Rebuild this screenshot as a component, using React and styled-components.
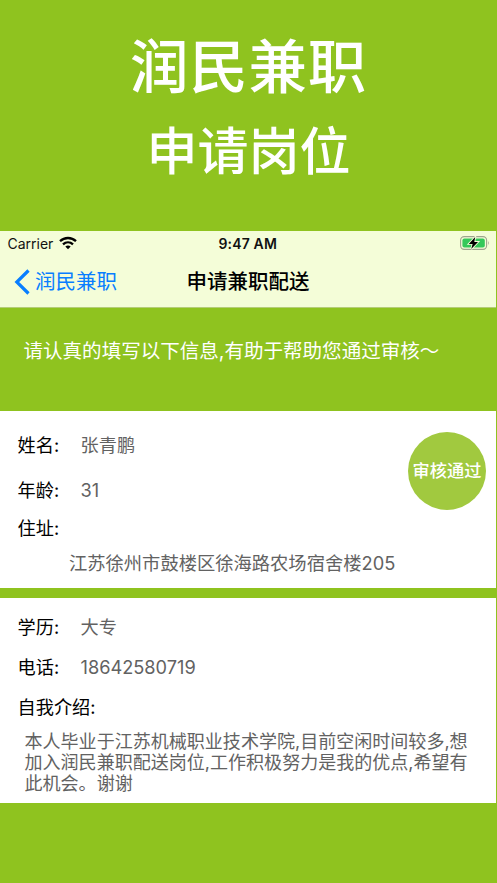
import React from 'react';
import styled, { createGlobalStyle } from 'styled-components';

const GREEN = '#8fc31f';

const GlobalStyle = createGlobalStyle`
  body {
    margin: 0;
    background: ${GREEN};
    font-family: Inter, "Noto Sans CJK SC", sans-serif;
  }
`;

const Page = styled.main`
  box-sizing: border-box;
  width: 497px;
  height: 883px;
  overflow: hidden;
  background: ${GREEN};
  white-space: nowrap;
`;

const Hero = styled.header`
  box-sizing: border-box;
  height: 231px;
  padding-top: 21px;
  color: #fff;
  text-align: center;
  font-family: "Noto Sans CJK SC", sans-serif;
  font-weight: 500;
`;

const HeroLine = styled.h1`
  margin: 0;
  height: ${(p) => p.$height}px;
  line-height: ${(p) => p.$height}px;
  font-size: ${(p) => p.$size}px;
  font-weight: inherit;
  letter-spacing: ${(p) => p.$spacing}px;
`;

const Phone = styled.section`
  width: 496px;
`;

const TopBar = styled.div`
  height: 77px;
  background: #f4fdd8;
  border-bottom: 1px solid #b5cd78;
  box-sizing: border-box;
`;

const StatusBar = styled.div`
  display: grid;
  grid-template-columns: 1fr auto 1fr;
  align-items: center;
  box-sizing: border-box;
  height: 25px;
  padding: 0 6px 0 7.5px;
  font-size: 14px;
  color: #111;
`;

const Carrier = styled.div`
  display: flex;
  align-items: center;
  gap: 6px;
  margin-top: -1px;
`;

const Clock = styled.span`
  margin: -1px 2px 0 0;
  font-weight: 600;
  letter-spacing: 0.15px;
`;

const BatterySlot = styled.div`
  display: flex;
  justify-content: flex-end;
  margin-top: -1px;
`;

const NavBar = styled.nav`
  display: grid;
  grid-template-columns: 1fr auto 1fr;
  align-items: center;
  height: 51px;
  padding: 0 14px;
  line-height: 52px;
  font-size: 20.5px;
  color: #000;
`;

const Back = styled.a`
  display: flex;
  align-items: center;
  gap: 5px;
  color: #087eff;
`;

const NavTitle = styled.h2`
  margin: 0;
  font-size: inherit;
  font-weight: 500;
`;

const Notice = styled.p`
  margin: 0;
  box-sizing: border-box;
  height: 103px;
  padding: 23px 23.5px 0;
  line-height: 40px;
  font-size: 19.55px;
  color: #fff;
`;

const Card = styled.section`
  display: flex;
  justify-content: space-between;
  box-sizing: border-box;
  height: ${(p) => p.$height}px;
  margin-bottom: 10px;
  padding: ${(p) => p.$top}px 10px 0 17.5px;
  background: #fff;
`;

const Fields = styled.div`
  display: flex;
  flex-direction: column;
`;

const Field = styled.div`
  display: flex;
  height: ${(p) => p.$height}px;
  line-height: 30px;
  font-size: 18.2px;
`;

const Label = styled.span`
  width: 63px;
  color: #000;
`;

const Value = styled.span`
  color: #626262;
  font-weight: 400;
`;

const Address = styled(Value)`
  padding-left: 51.5px;
  line-height: 30px;
  font-size: 18.3px;
`;

const Bio = styled.p`
  margin: 0;
  padding-left: 7px;
  line-height: 21px;
  font-size: 18.05px;
  color: #626262;
  white-space: pre-line;
`;

const Badge = styled.div`
  width: 78px;
  height: 78px;
  margin-top: 2px;
  border-radius: 50%;
  background: #a1c93f;
  color: #fff;
  text-align: center;
  line-height: 78px;
  font-size: 17.2px;
  font-weight: 500;
`;

function Wifi() {
  return (
    <svg width="18" height="14" viewBox="0 0 18 14" fill="none" stroke="#000" strokeWidth="2.3">
      <path d="M1 5.2C5.5.9 12.500.9 17 5.2" />
      <path d="M4 8.300C6.900 5.600 11.100 5.600 14 8.300" />
      <path d="M6.300 10.600Q9 8.300 11.700 10.600L9 13.300Z" fill="#000" stroke="none" />
    </svg>
  );
}

function Battery() {
  return (
    <svg width="30" height="14" viewBox="0 0 30 14">
      <rect x="0.600" y="0.600" width="26" height="12.800" rx="3.600" fill="none" stroke="#9da58e" strokeWidth="1.100" />
      <rect x="2.400" y="2.400" width="22.400" height="9.200" rx="2" fill="#34c85a" />
      <path d="M28 4.800Q29.600 7 28 9.200Z" fill="#9da58e" />
      <path d="M15.200 1L8.800 7.900H12.600L11.200 13L18 6H14.300Z" fill="#000" stroke="#f4fdd8" strokeWidth="1.800" paintOrder="stroke" />
    </svg>
  );
}

function Chevron() {
  return (
    <svg width="16" height="26" viewBox="0 0 16 26" fill="none" stroke="#087eff" strokeWidth="3.200">
      <path d="M14.500 1.500L2.800 13L14.500 24.500" />
    </svg>
  );
}

export default function App() {
  return (
    <Page>
      <GlobalStyle />
      <Hero>
        <HeroLine $size={58.5} $height={84} $spacing={0.7}>润民兼职</HeroLine>
        <HeroLine $size={51} $height={86} $spacing={0}>申请岗位</HeroLine>
      </Hero>
      <Phone>
        <TopBar>
          <StatusBar>
            <Carrier>Carrier <Wifi /></Carrier>
            <Clock>9:47 AM</Clock>
            <BatterySlot><Battery /></BatterySlot>
          </StatusBar>
          <NavBar>
            <Back><Chevron />润民兼职</Back>
            <NavTitle>申请兼职配送</NavTitle>
          </NavBar>
        </TopBar>
        <Notice>请认真的填写以下信息,有助于帮助您通过审核～</Notice>
        <Card $height={177} $top={19}>
          <Fields>
            <Field $height={45}><Label>姓名:</Label><Value>张青鹏</Value></Field>
            <Field $height={38}><Label>年龄:</Label><Value>31</Value></Field>
            <Field $height={35}><Label>住址:</Label></Field>
            <Address>江苏徐州市鼓楼区徐海路农场宿舍楼205</Address>
          </Fields>
          <Badge>审核通过</Badge>
        </Card>
        <Card $height={205} $top={14}>
          <Fields>
            <Field $height={40}><Label>学历:</Label><Value>大专</Value></Field>
            <Field $height={40}><Label>电话:</Label><Value>18642580719</Value></Field>
            <Field $height={39}><Label>自我介绍:</Label></Field>
            <Bio>{'本人毕业于江苏机械职业技术学院,目前空闲时间较多,想\n加入润民兼职配送岗位,工作积极努力是我的优点,希望有\n此机会。谢谢'}</Bio>
          </Fields>
        </Card>
      </Phone>
    </Page>
  );
}
